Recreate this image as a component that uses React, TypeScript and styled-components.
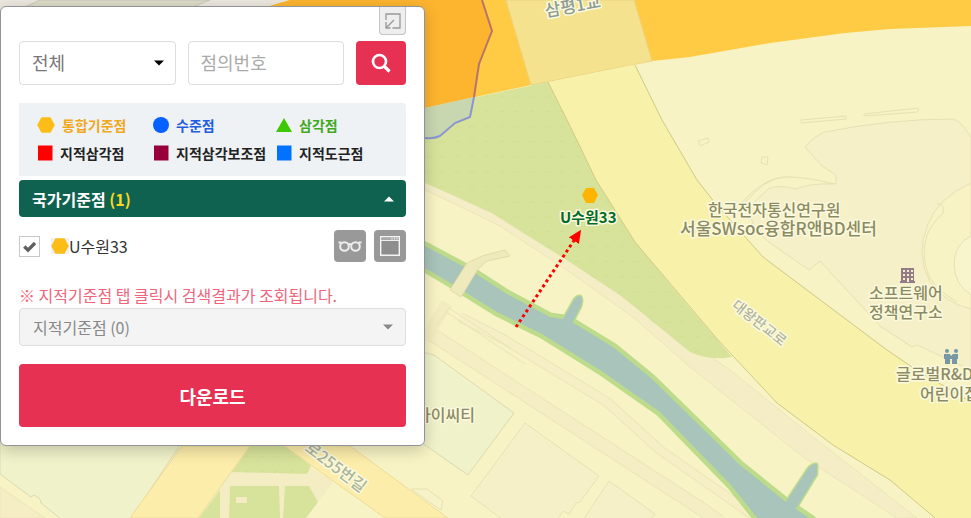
import React, { useState } from "react";
import styled, { createGlobalStyle, css } from "styled-components";

const GlobalStyle = createGlobalStyle`
  *, *::before, *::after { box-sizing: border-box; }
  body { margin: 0; }
  body, button, input, select {
    font-family: "Noto Sans CJK KR", "Noto Sans", sans-serif;
  }
`;

const Page = styled.main`
  position: relative;
  min-height: 100vh;
  padding-top: 6px;
  overflow: hidden;
  background: #f7f3c4;
`;

const MapCanvas = styled.svg`
  position: absolute;
  inset: 0;
  width: 100%;
  height: 100%;
`;

const Panel = styled.section`
  position: relative;
  width: 425px;
  max-width: 100%;
  padding: 0 18px 18px;
  background: #fff;
  border: 1px solid #92929a;
  border-radius: 6px;
  box-shadow: 0 4px 16px rgba(0, 0, 0, 0.2);
`;

const PanelTop = styled.header`
  display: flex;
  justify-content: flex-end;
  height: 34px;
`;

const CollapseButton = styled.button`
  display: grid;
  place-items: center;
  width: 27px;
  height: 28px;
  padding: 0;
  border: 1px solid #c4c4c4;
  border-top: 0;
  border-radius: 0 0 4px 4px;
  background: #eee;
  cursor: pointer;
`;

const SearchForm = styled.form`
  display: grid;
  grid-template-columns: 1fr 1fr 50px;
  gap: 12px;
  height: 44px;
`;

const SelectBox = styled.div`
  display: grid;
  align-items: center;

  > * { grid-area: 1 / 1; }
  > svg {
    justify-self: end;
    margin-right: 12px;
    pointer-events: none;
  }
`;

const field = css`
  width: 100%;
  height: 44px;
  padding: 0 12px 2px;
  border: 1px solid #ddd;
  border-radius: 4px;
  background: #fff;
  color: #777;
  font-size: 18px;
`;

const Select = styled.select`
  ${field}
  appearance: none;
`;

const TextInput = styled.input`
  ${field}
  &::placeholder { color: #aaa; opacity: 1; }
`;

const SearchButton = styled.button`
  display: grid;
  place-items: center;
  padding: 0;
  border: 0;
  border-radius: 4px;
  background: #e63152;
  cursor: pointer;
`;

const Legend = styled.ul`
  display: grid;
  grid-template-columns: 116fr 123fr 130fr;
  grid-auto-rows: 28px;
  margin: 18px 0 4px;
  padding: 8px 0 9px 18px;
  list-style: none;
  background: #eef2f5;
  border-radius: 0 4px 0 0;
`;

const LegendItem = styled.li<{ $color: string }>`
  display: flex;
  align-items: center;
  gap: 7px;
  color: ${(p) => p.$color};
  font-size: 14px;
  font-weight: 700;
  white-space: nowrap;
`;

const Accordion = styled.button<{ $active?: boolean }>`
  display: flex;
  align-items: center;
  justify-content: space-between;
  width: 100%;
  height: ${(p) => (p.$active ? 37 : 38)}px;
  padding: 0 12px 0 13px;
  border: ${(p) => (p.$active ? "0" : "1px solid #ddd")};
  border-radius: 4px;
  background: ${(p) => (p.$active ? "#0f624f" : "#f4f4f4")};
  color: ${(p) => (p.$active ? "#fff" : "#888")};
  font-size: 16px;
  font-weight: ${(p) => (p.$active ? 700 : 400)};
  cursor: pointer;
`;

const Count = styled.span`
  color: #ffd71c;
`;

const ResultRow = styled.div`
  display: flex;
  align-items: center;
  gap: 8px;
  padding: 13px 0;
`;

const ResultLabel = styled.label`
  display: flex;
  flex: 1;
  align-items: center;
  color: #333;
  font-size: 16px;
  line-height: 24px;
`;

const CheckBox = styled.input`
  appearance: none;
  width: 21px;
  height: 21px;
  margin: 0 11px 0 0;
  border: 1px solid #c8c8c8;
  background: #fff;

  &:checked {
    background: #fff
      url("data:image/svg+xml,%3Csvg xmlns='http://www.w3.org/2000/svg' viewBox='0 0 19 19'%3E%3Cpath d='M4.3 9.5l3.7 3.7 7-7.2' fill='none' stroke='%23606060' stroke-width='3.4'/%3E%3C/svg%3E");
  }
`;

const ResultSymbol = styled.span`
  display: flex;
  background: #eef1f4;
`;

const IconButton = styled.button`
  display: grid;
  place-items: center;
  width: 32px;
  height: 32px;
  padding: 0;
  border: 0;
  border-radius: 4px;
  background: #999;
  cursor: pointer;
`;

const Notice = styled.p`
  margin: 8px 0 1px;
  color: #f0657c;
  font-size: 16px;
  line-height: 24px;
`;

const DownloadButton = styled.button`
  display: block;
  width: 100%;
  height: 63px;
  margin-top: 18px;
  border: 0;
  border-radius: 4px;
  background: #e63152;
  color: #fff;
  font-size: 18px;
  font-weight: 700;
  cursor: pointer;
`;

const PlaceLabel = styled.text<{ $size?: number; $color?: string; $weight?: number }>`
  font-family: "Noto Sans CJK KR", "Noto Sans", sans-serif;
  font-size: ${(p) => p.$size ?? 16}px;
  font-weight: ${(p) => p.$weight ?? 500};
  fill: ${(p) => p.$color ?? "#8b8b62"};
  stroke: #fbf9df;
  stroke-width: 3px;
  stroke-linejoin: round;
  paint-order: stroke;
`;

function Caret({ up, color }: { up?: boolean; color: string }) {
  return (
    <svg width="10" height="6" viewBox="0 0 10 6" aria-hidden="true">
      <path d={up ? "M0 5.5 5 .5l5 5z" : "M0 .5h10l-5 5z"} fill={color} />
    </svg>
  );
}

type Shape = "hexagon" | "circle" | "triangle" | "square";

function PointSymbol({ shape, color }: { shape: Shape; color: string }) {
  return (
    <svg width={shape === "hexagon" ? 18 : 16} height="16" viewBox={shape === "hexagon" ? "0 0 18 16" : "0 0 16 16"} aria-hidden="true">
      {shape === "hexagon" && <path d="M4.5.3h9L17.8 8l-4.3 7.7h-9L.2 8z" fill={color} />}
      {shape === "circle" && <circle cx="8" cy="8" r="8" fill={color} />}
      {shape === "triangle" && <path d="M8 1l8 14H0z" fill={color} />}
      {shape === "square" && <path d="M1 .5h14.500v15H1z" fill={color} />}
    </svg>
  );
}

const legend: { name: string; shape: Shape; color: string; text: string }[] = [
  { name: "통합기준점", shape: "hexagon", color: "#fdbc16", text: "#f0a91c" },
  { name: "수준점", shape: "circle", color: "#0561ff", text: "#1f5ddc" },
  { name: "삼각점", shape: "triangle", color: "#3ec800", text: "#43a81f" },
  { name: "지적삼각점", shape: "square", color: "#ff0000", text: "#222" },
  { name: "지적삼각보조점", shape: "square", color: "#98003c", text: "#222" },
  { name: "지적도근점", shape: "square", color: "#0072ff", text: "#222" },
];

const river =
  "M400 234L425 246 470 270 507 294 550 317 563 319 572 322 613 347 651 378 695 421 740 465 786 502 812 520 762 524 731 485 694 447 660 412 603 372 542 334 497 312 452 284 425 268 400 256Z";
const streams =
  "M562 323L575 300Q577 297 580 297 582 299 580 306L570 325zM785 505L808 470Q812 465 816 465L816 474 794 510z";

function MapView() {
  return (
    <MapCanvas viewBox="0 0 971 518" preserveAspectRatio="xMinYMin slice" role="img" aria-label="지도">
      <defs>
        <pattern id="grass" width="15" height="15" patternUnits="userSpaceOnUse">
          <path d="M4 8q3-4 6 0" fill="none" stroke="#cfdc91" strokeWidth="1" />
        </pattern>
        <marker id="arrowhead" markerWidth="14" markerHeight="14" refX="2" refY="6" orient="auto" markerUnits="userSpaceOnUse">
          <path d="M0 0L13 6 0 12z" fill="#f00" />
        </marker>
      </defs>
      <rect width="971" height="518" fill="#f7f3c4" />

      <path d="M0 0H300V12H0z" fill="#ece8df" />
      <path d="M40 0H210L180 12H14z" fill="#dddcc7" stroke="#c9c6b5" />

      <path d="M290 0H971V26L890 29 845 33 770 43 690 57 652 61 531 85 425 108 250 150V12z" fill="#ffcb45" />
      <path d="M290 0H482L492 31 479 64 474 97 425 108 250 150V12z" fill="#fdb52f" />
      <path d="M506 0H634L652 61 531 85z" fill="#f4e28f" stroke="#edd381" />

      <g stroke="#e8e0b5" fill="#f6f0c8">
        <path d="M805 147Q814 136 825 132 890 119 953 119 960 120 971 137V370L917 345 912 347 880 326 820 261 809 270 770 243Q750 228 750 210L740 205Q765 175 790 177L836 184V175L822 166z" />
        <path d="M745 203Q765 178 785 177 810 177 833 184 810 183 796 189 778 184 768 189L745 211z" fill="#f7f3c4" />
        <path d="M971 183Q938 198 928 224 915 255 930 282 945 303 971 309z" fill="#f7f3c4" />
        <path d="M971 236Q954 244 954 265 955 285 971 295" fill="#f8f5cc" />
        <path d="M937 204Q945 203 943 213 931 225 927 235 920 258 930 278 939 292 957 302" fill="none" />
        <path d="M801 120l45-4v3l-45 4zM864 114l54-6v4l-54 4zM698 141l10-3 1 4-9 4zM762 157h6l-1 8-6-2z" fill="none" />
      </g>

      <path d="M425 182L457 197 492 213 530 237 567 260 620 295 677 333 730 370 817 440 917 518H897L803 457 690 367 633 317 567 270 500 226 457 205 425 190z" fill="#f4edc6" stroke="#eee5ba" />
      <path d="M425 108L548 82 572 130 596 180 635 242 690 308 732 357Q710 361 690 352L620 295 567 260 530 237 492 213 457 197 400 172V114z" fill="#d7e39b" />
      <path d="M425 108L548 82 572 130 596 180 635 242 690 308 732 357Q710 361 690 352L620 295 567 260 530 237 492 213 457 197 400 172V114z" fill="url(#grass)" />
      <path d="M425 108L474 97 470 117 455 123 440 136 425 138z" fill="#c9d7b0" />
      <path d="M482 0L492 31 479 64 474 97" fill="none" stroke="#b9746a" strokeWidth="2" />
      <path d="M474 97L470 117 455 123 440 136Q434 139 425 138" fill="none" stroke="#8a97cf" strokeWidth="2" />

      <path d="M548 82L652 61 635 65 662 120 697 180 715 203 763 257 887 350 912 367 971 402V518H935L890 480 833 445 777 403 718 340 635 242 596 180 572 130z" fill="#f7f1a9" />
      <path d="M548 82L572 130 596 180 635 242 718 340 777 403 833 445 890 480 935 518M635 65L662 120 697 180 715 203 763 257 887 350 912 367 971 402" fill="none" stroke="#d2c987" />

      <g fill="none" strokeLinejoin="round">
        <path d="M425 330L700 508 720 522" stroke="#ede5ba" strokeWidth="14" />
        <path d="M425 330L700 508 720 522" stroke="#f5eec4" strokeWidth="12" />
        <path d="M460 317L505 340 607 402 660 450 760 520" stroke="#ede5ba" strokeWidth="10" />
        <path d="M460 317L505 340 607 402 660 450 760 520" stroke="#f6efc5" strokeWidth="8" />
        <path d="M425 340L447 303" stroke="#f3ecc0" strokeWidth="12" />
      </g>
      <path d={streams} fill="#a9c4bb" stroke="#bddc8b" strokeWidth="5" strokeLinejoin="round" />
      <path d={river} fill="#a9c4bb" stroke="#bddc8b" strokeWidth="9" strokeLinejoin="round" />
      <path d={river} fill="#a9c4bb" />
      <path d={streams} fill="#a9c4bb" stroke="#a9c4bb" strokeWidth="2" />
      <path d="M450 290L467 263 482 256 505 250 510 256 487 261 478 269 461 297z" fill="#eeeabc" stroke="#e2dca8" />

      <g stroke="#ddd9b2">
        <path d="M400 346L434 355 514 413 468 475 425 445 400 430z" fill="#f0f2ca" />
        <path d="M525 423L599 476 580 502 576 503 569 514 563 511 557 520H503L471 496z" fill="#f6f0c8" stroke="#e9e1b6" />
        <path d="M609 481L655 514 651 520H583z" fill="#f6f0c8" stroke="#e9e1b6" />
        <path d="M445 311L525 364M437 325L449 308 510 348" fill="none" stroke="#eae3b8" />
        <path d="M0 430H190L130 520H62L41 503 40 499 34 495 31 497 0 474z" fill="#f0f2ca" />
        <path d="M0 487L45 518H0z" fill="#f5edc4" stroke="#eee5ba" />
      </g>

      <path d="M250 446H283L311 468 334 481 306 518H198z" fill="#f4edc4" />
      <g fill="#d7e39b">
        <path d="M250 446H286L311 466 307 474 232 472zM220 490V518H199zM230 486H279L280 518H229zM285 486H309L318 502 306 518H283z" />
      </g>
      <path d="M250 446H286L311 466 307 474 232 472z" fill="url(#grass)" />
      <rect x="236" y="497" width="11" height="6" rx="1" fill="#f4edc4" />
      <path d="M182 446H250L198 518H130zM283 445L385 518H448L350 446z" fill="#fcedaa" stroke="#eddc9b" />
      <path d="M411 489l16 0 16 12-2 9z" fill="#f7f3c8" stroke="#e9dfb0" />

      <PlaceLabel x="546" y="17" $size={17} $color="#8d9c92" transform="rotate(-10 546 17)">삼평1교</PlaceLabel>
      <PlaceLabel x="708" y="216">한국전자통신연구원</PlaceLabel>
      <PlaceLabel x="680" y="235" $size={17}>서울SWsoc융합R앤BD센터</PlaceLabel>
      <PlaceLabel x="869" y="299">소프트웨어</PlaceLabel>
      <PlaceLabel x="869" y="318">정책연구소</PlaceLabel>
      <PlaceLabel x="896" y="380">글로벌R&amp;D</PlaceLabel>
      <PlaceLabel x="920" y="400">어린이집</PlaceLabel>
      <PlaceLabel x="416" y="421">아이씨티</PlaceLabel>
      <PlaceLabel x="731" y="307" $size={14} $color="#b1b59d" transform="rotate(38 731 307)">대왕판교로</PlaceLabel>
      <PlaceLabel x="304" y="450" $size={16} $color="#acb598" transform="rotate(37 304 450)">로255번길</PlaceLabel>

      <path d="M901 268h13v13h1v2h-15v-2h1z" fill="#947b88" />
      <path d="M903 270h2v2h-2zm4 0h2v2h-2zm4 0h2v2h-2zm-8 4h2v2h-2zm4 0h2v2h-2zm4 0h2v2h-2zm-8 4h2v2h-2zm8 0h2v2h-2zm-4 0h2v4h-2z" fill="#f6f0c8" />
      <g fill="#7897a6">
        <circle cx="947" cy="351" r="2" />
        <circle cx="956" cy="351" r="2" />
        <path d="M944 354h6l1 2 2-2h5v5h-1v5h-5v-5h-2v5h-5v-5h-1z" />
      </g>

      <path d="M516 327L575 239" fill="none" stroke="#f00" strokeWidth="3" strokeDasharray="3 3" markerEnd="url(#arrowhead)" />
      <path d="M586 188h8l4 7-4 8h-8l-4-8z" fill="#ffb400" />
      <PlaceLabel x="560" y="223" $size={15} $weight={700} $color="#006b28">U수원33</PlaceLabel>
    </MapCanvas>
  );
}

export default function App() {
  const [checked, setChecked] = useState(true);
  return (
    <Page>
      <GlobalStyle />
      <MapView />
      <Panel aria-label="기준점 검색">
        <PanelTop>
          <CollapseButton type="button" aria-label="접기">
            <svg width="16" height="16" viewBox="0 0 16 16" fill="none" stroke="#999" strokeWidth="1.3" aria-hidden="true">
              <path d="M1 7V1h14v14H7.500M1 9v6h4.500M9 7l-8 8" />
            </svg>
          </CollapseButton>
        </PanelTop>
        <SearchForm onSubmit={(e) => e.preventDefault()}>
          <SelectBox>
            <Select aria-label="구분" defaultValue="전체">
              <option>전체</option>
              {legend.map((item) => (
                <option key={item.name}>{item.name}</option>
              ))}
            </Select>
            <Caret color="#000" />
          </SelectBox>
          <TextInput type="text" aria-label="점의번호" placeholder="점의번호" />
          <SearchButton type="submit" aria-label="검색">
            <svg width="20" height="20" viewBox="0 0 20 20" fill="none" stroke="#fff" aria-hidden="true">
              <circle cx="8.500" cy="8.500" r="6.500" strokeWidth="2.6" />
              <path d="M13 13l5.500 5.500" strokeWidth="3.2" />
            </svg>
          </SearchButton>
        </SearchForm>
        <Legend>
          {legend.map((item) => (
            <LegendItem key={item.name} $color={item.text}>
              <PointSymbol shape={item.shape} color={item.color} />
              {item.name}
            </LegendItem>
          ))}
        </Legend>
        <Accordion type="button" aria-expanded="true" $active>
          <span>
            국가기준점 <Count>(1)</Count>
          </span>
          <Caret up color="#fff" />
        </Accordion>
        <ResultRow>
          <ResultLabel>
            <CheckBox type="checkbox" checked={checked} onChange={(e) => setChecked(e.target.checked)} />
            <ResultSymbol>
              <PointSymbol shape="hexagon" color="#fdbc16" />
            </ResultSymbol>
            U수원33
          </ResultLabel>
          <IconButton type="button" aria-label="보기">
            <svg width="24" height="12" viewBox="0 0 24 12" fill="none" stroke="#eee" strokeWidth="2" aria-hidden="true">
              <circle cx="6.500" cy="6.500" r="4.300" />
              <circle cx="17.500" cy="6.500" r="4.300" />
              <path d="M10.500 4.500q1.500-1 3 0M.5 2.500h3M20.500 2.500h3" />
            </svg>
          </IconButton>
          <IconButton type="button" aria-label="상세정보">
            <svg width="20" height="20" viewBox="0 0 20 20" aria-hidden="true">
              <path d="M.7.700h18.600v18.600H.7z" fill="#8d8d8d" stroke="#f4f4f4" strokeWidth="1.400" />
              <path d="M1.500 1.500h17v3h-17z" fill="#aaa" />
              <path d="M1 4.500h18M12 1.500v2M14.500 1.500v2M17 1.500v2" stroke="#eee" />
            </svg>
          </IconButton>
        </ResultRow>
        <Notice>※ 지적기준점 탭 클릭시 검색결과가 조회됩니다.</Notice>
        <Accordion type="button" aria-expanded="false">
          <span>지적기준점 (0)</span>
          <Caret color="#888" />
        </Accordion>
        <DownloadButton type="button">다운로드</DownloadButton>
      </Panel>
    </Page>
  );
}
